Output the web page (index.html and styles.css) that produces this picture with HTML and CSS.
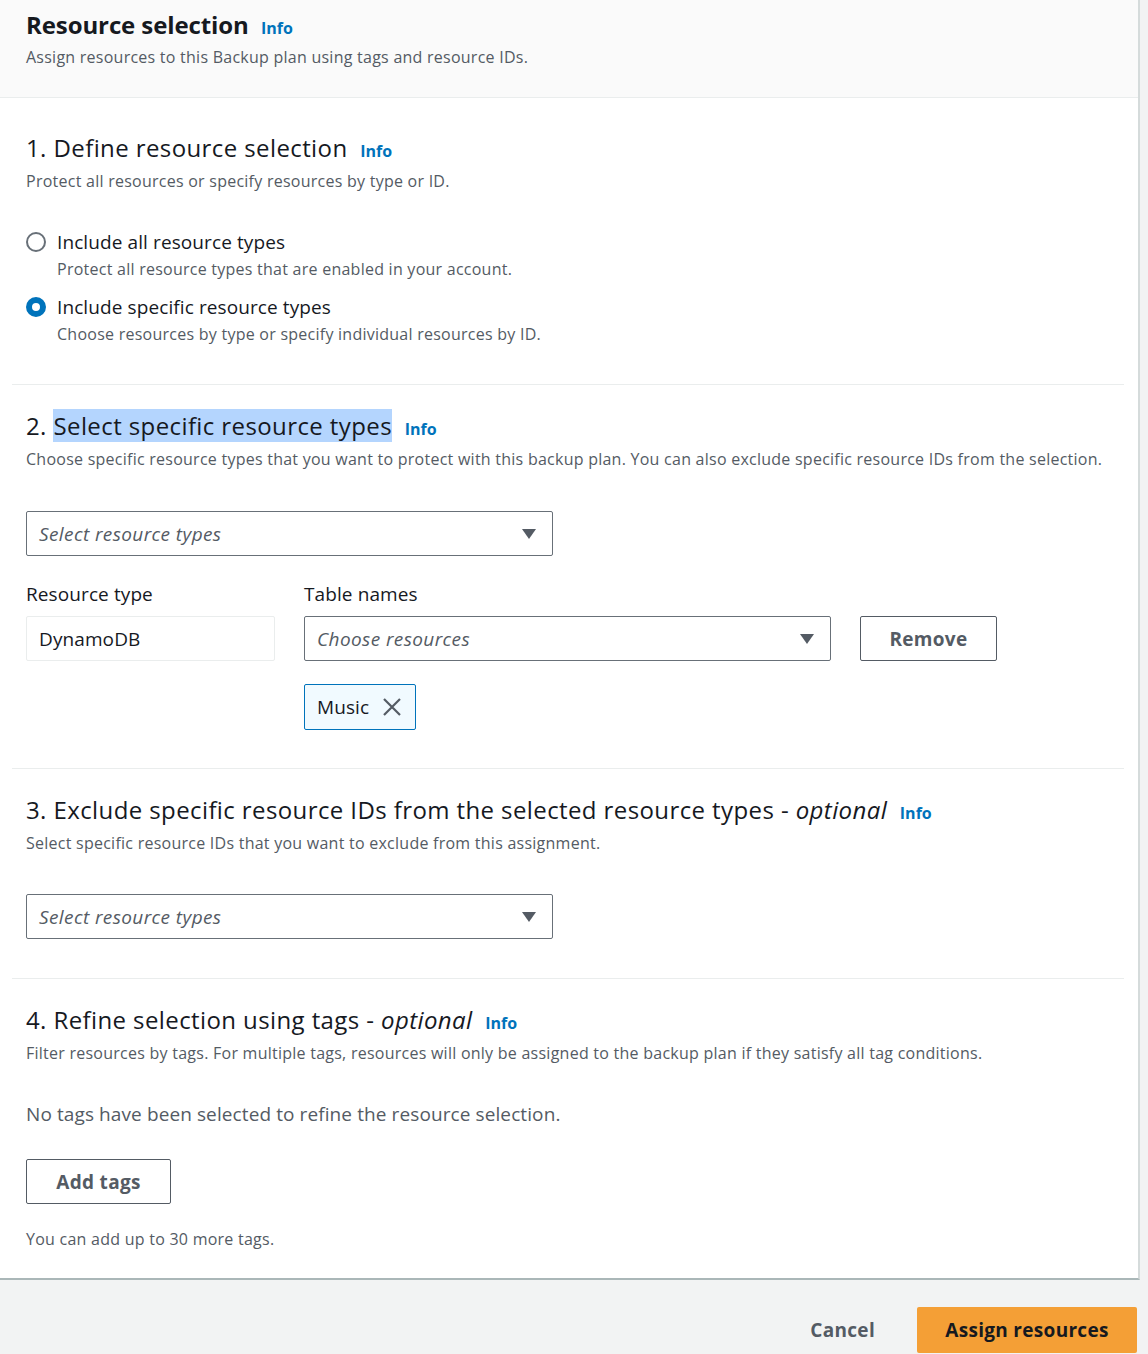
FILE: index.html
```html
<!DOCTYPE html>
<html>
<head>
<meta charset="utf-8">
<link rel="stylesheet" href="styles.css">
</head>
<body>
<div class="card">
  <div class="card-header">
    <h1 class="title">Resource selection <a class="info">Info</a></h1>
    <p class="desc">Assign resources to this Backup plan using tags and resource IDs.</p>
  </div>
  <div class="card-body">
    <section class="section">
      <h2 class="heading">1. Define resource selection <a class="info">Info</a></h2>
      <p class="desc">Protect all resources or specify resources by type or ID.</p>
      <div class="radios">
        <div class="radio">
          <span class="radio-circle"></span>
          <div>
            <div class="radio-label">Include all resource types</div>
            <div class="radio-desc">Protect all resource types that are enabled in your account.</div>
          </div>
        </div>
        <div class="radio">
          <span class="radio-circle checked"></span>
          <div>
            <div class="radio-label">Include specific resource types</div>
            <div class="radio-desc">Choose resources by type or specify individual resources by ID.</div>
          </div>
        </div>
      </div>
    </section>
    <section class="section sec-types">
      <h2 class="heading">2. <span class="hl">Select specific resource types</span> <a class="info">Info</a></h2>
      <p class="desc">Choose specific resource types that you want to protect with this backup plan. You can also exclude specific resource IDs from the selection.</p>
      <div class="select wide top-gap">
        <span class="placeholder">Select resource types</span>
        <svg class="caret" width="14" height="10" viewBox="0 0 14 10"><path d="M0 0 H14 L7 10 Z" fill="#545b64"/></svg>
      </div>
      <div class="row">
        <div class="col col-type">
          <div class="label">Resource type</div>
          <div class="readonly">DynamoDB</div>
        </div>
        <div class="col col-names">
          <div class="label">Table names</div>
          <div class="select">
            <span class="placeholder">Choose resources</span>
            <svg class="caret" width="14" height="10" viewBox="0 0 14 10"><path d="M0 0 H14 L7 10 Z" fill="#545b64"/></svg>
          </div>
          <div class="token">
            <span>Music</span>
            <svg width="20" height="20" viewBox="0 0 20 20"><path d="M2 2 L18 18 M18 2 L2 18" stroke="#545b64" stroke-width="2.2" fill="none"/></svg>
          </div>
        </div>
        <div class="col col-btn">
          <button class="btn remove">Remove</button>
        </div>
      </div>
    </section>
    <section class="section">
      <h2 class="heading">3. Exclude specific resource IDs from the selected resource types - <em>optional</em> <a class="info">Info</a></h2>
      <p class="desc">Select specific resource IDs that you want to exclude from this assignment.</p>
      <div class="select wide top-gap-sm">
        <span class="placeholder">Select resource types</span>
        <svg class="caret" width="14" height="10" viewBox="0 0 14 10"><path d="M0 0 H14 L7 10 Z" fill="#545b64"/></svg>
      </div>
    </section>
    <section class="section last">
      <h2 class="heading">4. Refine selection using tags - <em>optional</em> <a class="info">Info</a></h2>
      <p class="desc">Filter resources by tags. For multiple tags, resources will only be assigned to the backup plan if they satisfy all tag conditions.</p>
      <p class="empty">No tags have been selected to refine the resource selection.</p>
      <button class="btn add">Add tags</button>
      <p class="desc hint">You can add up to 30 more tags.</p>
    </section>
  </div>
</div>
<div class="footer">
  <button class="link-btn">Cancel</button>
  <button class="primary">Assign resources</button>
</div>
</body>
</html>
```
FILE: styles.css
```css
* { box-sizing: border-box; }
html, body { margin: 0; padding: 0; }
body {
  background: #f2f3f3;
  font-family: "Open Sans", "Noto Sans", sans-serif;
  color: #16191f;
  width: 1148px;
}
p { margin: 0; }
.card {
  width: 1140px;
  background: #fff;
  border-right: 2px solid #d5dbdb;
  border-bottom: 2px solid #aab7b8;
}
.card-header {
  background: #fafafa;
  border-bottom: 1px solid #eaeded;
  padding: 9px 26px 0;
  height: 98px;
}
.title {
  margin: 0;
  font-size: 24px;
  line-height: 32px;
  font-weight: 700;
  letter-spacing: -0.1px;
}
.info {
  color: #0073bb;
  font-size: 16px;
  font-weight: 700;
  margin-left: 6px;
  letter-spacing: 0;
}
.desc {
  font-size: 16px;
  line-height: 22px;
  color: #545b64;
  margin-top: 3px;
  letter-spacing: 0.25px;
}
.card-header .desc { margin-top: 2px; }
.card-body {
  padding: 0 14px 0 12px;
}
.section {
  padding: 34px 14px 39px;
  border-bottom: 1px solid #eaeded;
}
.section + .section { padding-top: 25px; }
.section.sec-types { padding-bottom: 38px; }
.section.last { border-bottom: none; padding-bottom: 28px; }
.heading {
  margin: 0;
  font-size: 24px;
  line-height: 32px;
  font-weight: 400;
  letter-spacing: 0.4px;
}
.heading em { font-style: italic; }
.hl { background: #b4d5fe; }
.radios { margin-top: 38px; display: flex; flex-direction: column; gap: 15px; }
.radio { display: flex; gap: 11px; }
.radio-circle {
  width: 20px; height: 20px;
  border-radius: 50%;
  border: 2px solid #687078;
  margin-top: 2px;
  flex: none;
}
.radio-circle.checked {
  border: 6px solid #0073bb;
  background: #fff;
}
.radio-label { font-size: 19px; line-height: 24px; letter-spacing: 0.1px; }
.radio-desc { font-size: 16px; line-height: 22px; color: #545b64; margin-top: 4px; letter-spacing: 0.25px; }
.select {
  height: 45px;
  border: 1px solid #687078;
  border-radius: 2px;
  display: flex;
  align-items: center;
  justify-content: space-between;
  padding: 0 16px 0 12px;
}
.select.wide { width: 527px; }
.top-gap { margin-top: 41px; }
.top-gap-sm { margin-top: 40px; }
.placeholder { font-style: italic; color: #545b64; font-size: 19px; letter-spacing: 0.4px; }
.row { display: flex; margin-top: 27px; }
.col-type { width: 278px; }
.col-names { width: 527px; margin-right: 29px; }
.col-btn { padding-top: 33px; }
.label { font-size: 19px; line-height: 22px; margin-bottom: 11px; letter-spacing: 0.1px; }
.readonly {
  width: 249px;
  height: 45px;
  border: 1px solid #eaeded;
  border-radius: 2px;
  display: flex;
  align-items: center;
  padding: 0 12px;
  font-size: 19px;
  letter-spacing: 0.1px;
}
.token {
  margin-top: 23px;
  display: inline-flex;
  align-items: center;
  gap: 13px;
  height: 46px;
  padding: 0 13px 0 12px;
  background: #f1faff;
  border: 1px solid #0073bb;
  border-radius: 2px;
  font-size: 19px;
  letter-spacing: 0.1px;
}
.btn {
  height: 45px;
  padding: 0;
  background: #fff;
  border: 1px solid #545b64;
  border-radius: 2px;
  font-family: inherit;
  font-size: 19px;
  font-weight: 700;
  color: #545b64;
  letter-spacing: 0.3px;
}
.btn.remove { width: 137px; }
.btn.add { margin-top: 33px; width: 145px; display: block; }
.empty { font-size: 19px; line-height: 24px; color: #545b64; margin-top: 38px; letter-spacing: 0.1px; }
.hint { margin-top: 24px; }
.footer {
  display: flex;
  justify-content: flex-end;
  gap: 26px;
  padding: 27px 11px 0 0;
  height: 76px;
  align-items: flex-start;
}
.link-btn {
  background: none; border: none;
  font-family: inherit;
  font-size: 19px;
  font-weight: 700;
  color: #545b64;
  height: 45px;
  padding: 0 16px;
  letter-spacing: 0.3px;
}
.primary {
  width: 220px;
  height: 46px;
  background: #f49f36;
  border: none;
  border-radius: 2px;
  font-family: inherit;
  font-size: 19px;
  font-weight: 700;
  color: #16191f;
  letter-spacing: 0.3px;
}
```
